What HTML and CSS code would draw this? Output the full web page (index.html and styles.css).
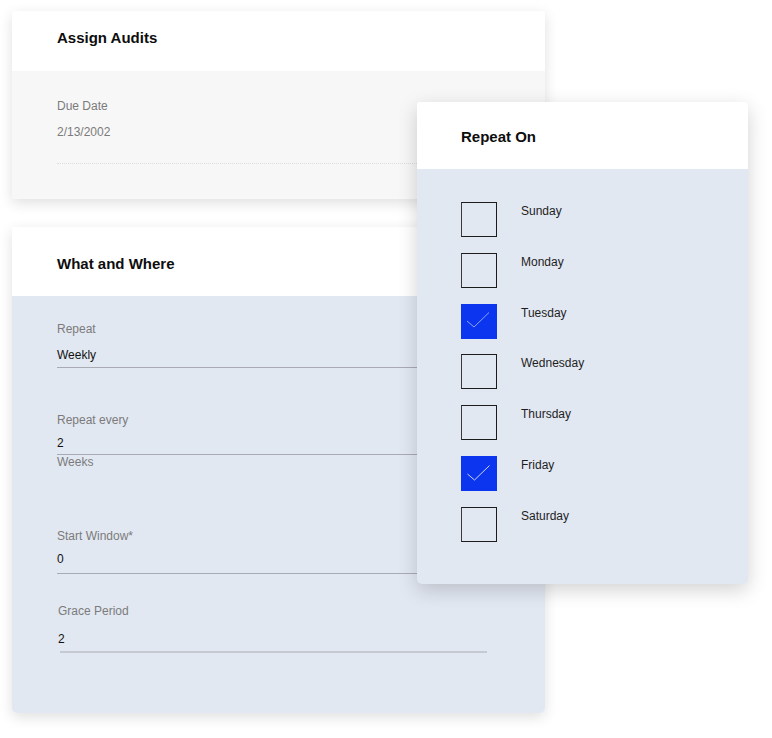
FILE: index.html
```html
<!DOCTYPE html>
<html>
<head>
<meta charset="utf-8">
<link rel="stylesheet" href="styles.css">
</head>
<body>
<div class="page">
  <section class="card card-audits">
    <header class="card-head head-audits"><h2 class="title">Assign Audits</h2></header>
    <div class="card-body body-audits">
      <div class="field field-due">
        <div class="label">Due Date</div>
        <div class="value muted">2/13/2002</div>
      </div>
    </div>
  </section>

  <section class="card card-what">
    <header class="card-head head-what"><h2 class="title">What and Where</h2></header>
    <div class="card-body body-what">
      <div class="field f-repeat">
        <div class="label">Repeat</div>
        <div class="value v-repeat">Weekly</div>
      </div>
      <div class="field f-every">
        <div class="label">Repeat every</div>
        <div class="value v-every">2</div>
      </div>
      <div class="label unit">Weeks</div>
      <div class="field f-start">
        <div class="label">Start Window*</div>
        <div class="value v-start">0</div>
      </div>
      <div class="field f-grace">
        <div class="label">Grace Period</div>
        <div class="value v-grace">2</div>
        <div class="grace-line"></div>
      </div>
    </div>
  </section>

  <section class="popup">
    <header class="popup-head"><h2 class="title">Repeat On</h2></header>
    <div class="popup-body">
      <div class="day"><span class="box"></span><span class="day-name">Sunday</span></div>
      <div class="day"><span class="box"></span><span class="day-name">Monday</span></div>
      <div class="day"><span class="box checked dim"><svg viewBox="0 0 36 35" width="36" height="35"><polyline points="6,17 13,23 28,8.5" fill="none" stroke="currentColor" stroke-width="0.8"/></svg></span><span class="day-name">Tuesday</span></div>
      <div class="day"><span class="box"></span><span class="day-name">Wednesday</span></div>
      <div class="day"><span class="box"></span><span class="day-name">Thursday</span></div>
      <div class="day"><span class="box checked"><svg viewBox="0 0 36 35" width="36" height="35"><polyline points="6.5,18 13.5,24 28.5,9.5" fill="none" stroke="currentColor" stroke-width="0.8"/></svg></span><span class="day-name">Friday</span></div>
      <div class="day"><span class="box"></span><span class="day-name">Saturday</span></div>
    </div>
  </section>
</div>
</body>
</html>
```

FILE: styles.css
```css
* { box-sizing: border-box; }
html, body { margin: 0; padding: 0; background: #ffffff; }
body {
  font-family: "Liberation Sans", Arial, sans-serif;
  color: #111;
  width: 772px;
  height: 738px;
  overflow: hidden;
}
.page {
  position: relative;
  padding: 11px 0 0 12px;
  height: 738px;
}
.card {
  width: 533px;
  background: #fff;
  border-radius: 3px;
  box-shadow: 0 4px 14px rgba(0, 0, 0, 0.13);
  overflow: hidden;
}
.card-what { margin-top: 28px; border-radius: 2px 2px 5px 5px; }
.card-head { background: #fff; padding-left: 45px; }
.head-audits { height: 60px; padding-top: 18px; }
.head-what { height: 69px; padding-top: 28px; }
.title {
  margin: 0;
  font-size: 15px;
  line-height: 18px;
  font-weight: bold;
  color: #0d0d0d;
}
.card-body { padding-left: 45px; }
.body-audits { background: #f7f7f7; height: 128px; padding-top: 28px; }
.body-what { background: #e2e8f2; height: 417px; padding-top: 26px; }

.field { width: 430px; }
.label {
  font-size: 12px;
  line-height: 14px;
  color: #7b7b7b;
}
.value {
  font-size: 12px;
  line-height: 14px;
  color: #111;
}
.muted { color: #7b7b7b; }

.field-due .value { margin-top: 12px; padding-bottom: 24px; border-bottom: 1px dotted #dcdcdc; }

.v-repeat { margin-top: 12px; padding-bottom: 5px; border-bottom: 1px solid #a9abb4; }
.f-every { margin-top: 45px; }
.v-every { margin-top: 9px; padding-bottom: 4px; border-bottom: 1px solid #a9abb4; }
.unit { margin-top: 0; }
.f-start { margin-top: 60px; }
.v-start { margin-top: 9px; padding-bottom: 7px; border-bottom: 1px solid #a9abb4; }
.f-grace { margin-top: 30px; margin-left: 1px; width: 429px; }
.v-grace { margin-top: 14px; padding-bottom: 5px; }
.grace-line { height: 2px; margin-left: 2px; width: 427px; background: #c6c9d2; }

.popup {
  position: absolute;
  left: 417px;
  top: 102px;
  width: 331px;
  height: 482px;
  background: #e2e8f2;
  border-radius: 2px 2px 5px 5px;
  box-shadow: 0 6px 20px rgba(0, 0, 0, 0.18);
  overflow: hidden;
}
.popup-head { background: #fff; height: 67px; padding: 26px 0 0 44px; }
.popup-body {
  padding: 33px 0 0 44px;
  display: grid;
  row-gap: 15.8px;
}
.day { display: flex; align-items: flex-start; height: 35px; }
.box {
  width: 36px;
  height: 35px;
  border: 1px solid #1c1c1c;
  border-left-color: #3a3a3a;
  flex: none;
  display: block;
}
.box.checked {
  background: #0b35ee;
  border: none;
  color: #ffffff;
}
.box.checked.dim { color: #b3c0ff; }
.box svg { display: block; }
.day-name {
  margin-left: 24px;
  margin-top: 2px;
  font-size: 12px;
  line-height: 14px;
  color: #1e1e1e;
}
```
